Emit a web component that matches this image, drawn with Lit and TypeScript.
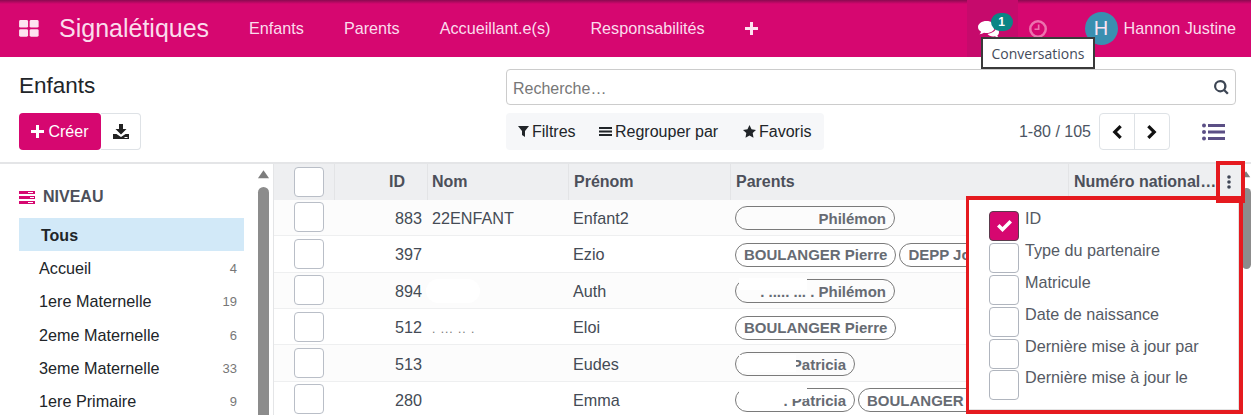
import { LitElement, html, css, svg } from "lit";
import { customElement } from "lit/decorators.js";

const NIVEAUX: [string, string][] = [
  ["Accueil", "4"],
  ["1ere Maternelle", "19"],
  ["2eme Maternelle", "6"],
  ["3eme Maternelle", "33"],
  ["1ere Primaire", "9"],
];

interface Pill { t: string; w?: number; mask?: string; }
const ROWS: { id: string; nom: string; pre: string; pills: Pill[]; blob?: boolean; smudge?: boolean }[] = [
  { id: "883", nom: "22ENFANT", pre: "Enfant2", pills: [{ t: "Philémon", w: 160 }] },
  { id: "397", nom: "", pre: "Ezio", pills: [{ t: "BOULANGER Pierre" }, { t: "DEPP Jo" }] },
  { id: "894", nom: "", pre: "Auth", pills: [{ t: ". ..... ... . Philémon", w: 160, mask: "top" }], blob: true },
  { id: "512", nom: ". ... .. .", pre: "Eloi", pills: [{ t: "BOULANGER Pierre" }], smudge: true },
  { id: "513", nom: "", pre: "Eudes", pills: [{ t: "Patricia", w: 120, mask: "mid" }] },
  { id: "280", nom: "", pre: "Emma", pills: [{ t: ". Patricia", w: 120, mask: "top" }, { t: "BOULANGER Pierre" }] },
];

const COLS = ["ID", "Type du partenaire", "Matricule", "Date de naissance", "Dernière mise à jour par", "Dernière mise à jour le"];

const ic = (w: number, h: number, vb: string, body: unknown, cls = "") =>
  html`<svg class="ic ${cls}" width=${w} height=${h} viewBox=${vb} fill="currentColor">${body}</svg>`;

@customElement("app-root")
export class AppRoot extends LitElement {
  static styles = css`
    :host { display: block; width: 1251px; height: 415px; overflow: hidden; position: relative; background: #fff;
      font-family: "Liberation Sans", Arial, sans-serif; font-size: 16px; color: #212529; }
    * { box-sizing: border-box; }
    .ic { display: block; flex: none; }

    .nav { height: 57px; background: #d60770; display: flex; align-items: center; color: #fbdcec; position: relative; font-size: 16.2px; }
    .nav::before { content: ""; position: absolute; left: 0; right: 0; top: 0; height: 4px;
      background: linear-gradient(#8a0a50, #d60770); }
    .apps { margin-left: 19px; width: 40px; color: #fde3f0; }
    .brand { font-size: 25px; width: 190px; }
    .link { margin-right: 40px; }
    .plus { color: #fde3f0; }
    .right { margin-left: auto; display: flex; align-items: center; height: 100%; }
    .chat { width: 51px; height: 100%; background: #c60a6c; display: flex; align-items: center; padding-left: 11px; position: relative; color: #fff; }
    .badge { position: absolute; left: 24px; top: 13px; width: 22px; height: 18px; border-radius: 9px; background: #0b8585;
      color: #fff; font-size: 12px; font-weight: 700; display: flex; align-items: center; justify-content: center; }
    .clock { margin-left: 11px; color: #ec72ae; }
    .avatar { margin-left: 38px; width: 33px; height: 33px; border-radius: 50%; background: #3a8fb0; color: #fde3f0;
      display: flex; align-items: center; justify-content: center; font-size: 20px; }
    .user { margin: 0 15px 0 6px; }
    .tip { position: absolute; left: 981px; top: 37px; width: 114px; height: 32px; background: #fff; border: 2px solid #3a3a3a;
      color: #444b5a; font-family: "Open Sans", sans-serif; font-size: 14px; display: flex; align-items: center; justify-content: center; z-index: 5; }

    .panel { height: 107px; border-bottom: 2px solid #e4e5e7; display: grid; grid-template-columns: 487px 1fr;
      grid-template-rows: 36px 37px; row-gap: 8px; padding: 12px 15px 0 19px; }
    .title { font-size: 22.5px; align-self: center; margin-top: -2px; }
    .search { border: 1px solid #ccc; border-radius: 4px; display: flex; align-items: center; justify-content: space-between;
      padding: 0 6px 0 6px; color: #777; }
    .search span { padding-top: 3px; }
    .search .ic { color: #3d4654; }
    .btns { display: flex; }
    .create { width: 82px; background: #d60770; color: #fff; border-radius: 4px; display: flex; align-items: center; justify-content: center; gap: 4px; }
    .dl { width: 40px; border: 1px solid #dee2e6; border-left: 0; border-radius: 0 4px 4px 0; display: flex; align-items: center; justify-content: center; color: #222; }
    .tools { display: flex; align-items: stretch; }
    .filters { width: 318px; background: #f6f7f9; border-radius: 4px; display: flex; align-items: center; padding-left: 12px; }
    .f { display: flex; align-items: center; gap: 3px; }
    .f.a { width: 81px; } .f.b { width: 144px; }
    .pager { margin-left: auto; display: flex; align-items: center; color: #4c5563; }
    .pg { margin-left: 8px; width: 71px; height: 37px; border: 1px solid #dee2e6; border-radius: 4px; display: flex; color: #111; }
    .pg div { flex: 1; display: flex; align-items: center; justify-content: center; }
    .pg div + div { border-left: 1px solid #dee2e6; }
    .view { margin-left: 32px; margin-right: 11px; color: #5b4f85; }

    .main { display: flex; height: 251px; overflow: hidden; font-size: 16.2px; }
    .side { width: 257px; flex: none; padding: 22px 13px 0 19px; }
    .shead { display: flex; align-items: center; gap: 8px; height: 22px; font-size: 16px; font-weight: 700; color: #4c4f5a; margin-bottom: 10px; }
    .magenta { color: #d60770; }
    .si { height: 33.2px; display: flex; align-items: center; justify-content: space-between; padding: 2px 7px 0 20px; }
    .si.sel { background: #d2e9f8; font-weight: 700; padding-left: 22px; font-size: 16px; }
    .si .n { font-size: 13px; color: #777; }
    .sb { width: 16px; flex: none; padding-top: 6px; color: #7d7d7d; }
    .thumb { margin: 8px 0 0 1px; width: 11px; height: 240px; border-radius: 6px 6px 0 0; background: #8c8c8c; }
    .table { flex: 1; min-width: 0; border-left: 1px solid #e4e5e7; display: flex; flex-direction: column; overflow: hidden; }
    .row { display: grid; grid-template-columns: 60px 93px 141px 162px 338px 1fr; height: 36.4px; flex: none; border-bottom: 1px solid #eeeff0; align-items: center; background: #fff; }
    .row.odd { background: #fcfcfc; }
    .row.head { height: 35.8px; background: #eeeff1; font-size: 16px; font-weight: 700; color: #4c4f5a; border-bottom: 0; align-items: stretch; }
    .head > div { display: flex; align-items: center; border-left: 1px solid #e3e4e6; }
    .head > div:first-child { border-left: 0; }
    .cb { width: 30px; height: 30px; border: 1px solid #b9bec7; border-radius: 4px; background: #fff; margin-left: 20px; }
    .idc { text-align: right; padding: 2px 5px 0 0; color: #444b55; position: relative; }
    .head .idh { justify-content: flex-end; padding-right: 22px; }
    .head .l { padding-left: 4px; }
    .head .l2 { padding-left: 5px; }
    .nom { padding: 2px 0 0 5px; color: #444b55; }
    .nom.sm { color: #777; font-size: 12px; letter-spacing: 1px; padding-top: 5px; }
    .pre { padding: 2px 0 0 5px; color: #444b55; }
    .blob { position: absolute; left: 92px; top: -1px; width: 54px; height: 24px; border-radius: 12px; background: #fff; }
    .pills { grid-column: 5 / 7; display: flex; gap: 3px; padding: 2px 0 0 5px; overflow: hidden; white-space: nowrap; }
    .pill { position: relative; height: 24px; border: 1.5px solid #7a7a7a; border-radius: 12px; padding: 0 8px; font-size: 15px; font-weight: 700; color: #666b73;
      display: flex; align-items: center; justify-content: flex-end; flex: none; overflow: visible; }
    .mask { position: absolute; background: #fff; }
    .mask.top { left: 3px; top: -2px; width: 68px; height: 12px; }
    .mask.mid { left: 3px; top: 2px; width: 57px; height: 17px; }
    .natl { display: flex; justify-content: space-between; padding: 0 10px 0 5px; white-space: nowrap; position: relative; }
    .dots { position: absolute; left: 158px; top: 11px; color: #3f4656; }

    .tsb { width: 10px; flex: none; padding-top: 6px; color: #7d7d7d; background: #fff; }
    .tthumb { margin-top: 9px; height: 81px; width: 9px; margin-left: 1px; border-radius: 6px; background: #8c8c8c; }

    .menu { position: absolute; left: 966px; top: 196px; width: 277px; height: 218px; border: 4px solid #e51a1f; border-left-width: 3px; background: #fff;
      box-shadow: inset -1px -1px 0 #e3e3e3; padding: 11px 0 0 20px; z-index: 3; color: #555a64; font-size: 16.2px; }
    .mi { display: flex; height: 31.9px; gap: 6px; }
    .mi span { margin-top: -2px; }
    .box { width: 30px; height: 30px; border: 1px solid #b0b5be; border-radius: 4px; background: #fff; display: flex; align-items: center; justify-content: center; flex: none; color: #fff; }
    .box.on { background: #d60770; border-color: #5b3a4c; }
    .redbox { position: absolute; left: 1216px; top: 161px; width: 29px; height: 42px; border: 4px solid #e51a1f; z-index: 4; }
  `;

  private pill(p: Pill) {
    return html`<div class="pill" style=${p.w ? `width:${p.w}px` : ""}>
      ${p.mask ? html`<i class="mask ${p.mask}"></i>` : ""}${p.t}
    </div>`;
  }

  render() {
    const comments = svg`<path d="M8.500 1C3.800 1 0 3.700 0 7c0 1.900 1.200 3.600 3.100 4.700C2.800 12.800 2.200 13.600 1.500 14.300 3.300 14 4.800 13.300 6 12.700c.800.200 1.700.300 2.500.300 4.700 0 8.500-2.700 8.500-6S13.200 1 8.500 1z"/><path d="M18.500 6.500c0 3.800-4 6.900-9 7.400 1.100 1.500 3.100 2.500 5.500 2.500.600 0 1.200-.100 1.800-.200 1 .600 2.300 1.200 3.900 1.500-.600-.600-1.100-1.400-1.400-2.300C20.300 15 21 13.700 21 12.300c0-2.200-1-3.900-2.800-5z"/>`;
    return html`
      <div class="nav">
        <div class="apps">${ic(20, 17, "0 0 21 18", svg`<rect width="9.500" height="8" rx="1.500"/><rect x="11.200" width="9.500" height="8" rx="1.500"/><rect y="9.700" width="9.500" height="8" rx="1.500"/><rect x="11.200" y="9.700" width="9.500" height="8" rx="1.500"/>`)}</div>
        <div class="brand">Signalétiques</div>
        <div class="link">Enfants</div>
        <div class="link">Parents</div>
        <div class="link">Accueillant.e(s)</div>
        <div class="link">Responsabilités</div>
        <div class="plus">${ic(13, 13, "0 0 13 13", svg`<path d="M5 0h3v5h5v3H8v5H5V8H0V5h5z"/>`)}</div>
        <div class="right">
          <div class="chat">${ic(21, 18, "0 0 21 18", comments)}<div class="badge">1</div></div>
          <div class="clock">${ic(18, 18, "0 0 18 18", svg`<path fill-rule="evenodd" d="M9 0a9 9 0 1 0 0 18A9 9 0 0 0 9 0zm0 2.500a6.500 6.500 0 1 1 0 13 6.500 6.500 0 0 1 0-13z"/><path d="M8.800 4.500h1.700v5.500H5.500V8.400h3.300z"/>`)}</div>
          <div class="avatar">H</div>
          <div class="user">Hannon Justine</div>
        </div>
      </div>
      <div class="tip">Conversations</div>

      <div class="panel">
        <div class="title">Enfants</div>
        <div class="search"><span>Recherche…</span>${ic(15, 15, "0 0 15 15", svg`<path fill-rule="evenodd" d="M6.200 0a6.200 6.200 0 1 0 3.600 11.300l3.200 3.300 1.700-1.700-3.300-3.200A6.200 6.200 0 0 0 6.200 0zm0 2.200a4 4 0 1 1 0 8 4 4 0 0 1 0-8z"/>`)}</div>
        <div class="btns">
          <div class="create">${ic(13, 13, "0 0 13 13", svg`<path d="M5 0h3v5h5v3H8v5H5V8H0V5h5z"/>`)}<span>Créer</span></div>
          <div class="dl">${ic(16, 15, "0 0 16 15", svg`<path d="M6 0h4v5h3.500L8 10.500 2.500 5H6z"/><path fill-rule="evenodd" d="M0 10h3.500L8 13l4.500-3H16v5H0zm11.500 3v1h3v-1z"/>`)}</div>
        </div>
        <div class="tools">
          <div class="filters">
            <div class="f a">${ic(11, 11, "0 0 11 11", svg`<path d="M0 0h11L7 5v6L4 9V5z"/>`)}<span>Filtres</span></div>
            <div class="f b">${ic(13, 11, "0 0 13 11", svg`<path d="M0 1h13v2H0zM0 4.500h13v2H0zM0 8h13v2H0z"/>`)}<span>Regrouper par</span></div>
            <div class="f">${ic(13, 13, "0 0 13 13", svg`<path d="M6.500 0l2 4.300 4.500.6-3.300 3.200.8 4.700-4-2.300-4 2.300.8-4.700L0 4.900l4.500-.6z"/>`)}<span>Favoris</span></div>
          </div>
          <div class="pager">
            <span>1-80 / 105</span>
            <div class="pg">
              <div>${ic(10, 14, "0 0 10 14", svg`<path d="M7.500 0L9.800 2.300 5 7l4.800 4.700L7.500 14 .5 7z"/>`)}</div>
              <div>${ic(10, 14, "0 0 10 14", svg`<path d="M2.500 0L.2 2.300 5 7 .2 11.700 2.500 14l7-7z"/>`)}</div>
            </div>
            <div class="view">${ic(23, 18, "0 0 23 18", svg`<circle cx="2" cy="2.500" r="2"/><circle cx="2" cy="9" r="2"/><circle cx="2" cy="15.500" r="2"/><path d="M6 1h17v3H6zM6 7.500h17v3H6zM6 14h17v3H6z"/>`)}</div>
          </div>
        </div>
      </div>

      <div class="main">
        <div class="side">
          <div class="shead">
            <span class="magenta">${ic(16, 13, "0 0 16 13", svg`<path fill-rule="evenodd" d="M0 0h16v3H0zm9 1v1h5V1zM0 5h16v3H0zm11 1v1h4V6zM0 10h16v3H0zm9 1v1h5v-1z"/>`)}</span>
            NIVEAU
          </div>
          <div class="si sel">Tous</div>
          ${NIVEAUX.map(([a, n]) => html`<div class="si"><span>${a}</span><span class="n">${n}</span></div>`)}
        </div>
        <div class="sb">
          ${ic(13, 9, "0 0 14 9", svg`<path d="M7 0l6 8.500H1z"/>`)}
          <div class="thumb"></div>
        </div>
        <div class="table">
          <div class="row head">
            <div><div class="cb"></div></div>
            <div class="idh">ID</div>
            <div class="l">Nom</div>
            <div class="l2">Prénom</div>
            <div class="l2">Parents</div>
            <div class="natl">Numéro national…<span class="dots">${ic(4, 14, "0 0 4 14", svg`<circle cx="2" cy="2" r="1.800"/><circle cx="2" cy="7" r="1.800"/><circle cx="2" cy="12" r="1.800"/>`)}</span></div>
          </div>
          ${ROWS.map((r, i) => html`
            <div class="row ${i % 2 ? "" : "odd"}">
              <div class="cb"></div>
              <div class="idc">${r.id}${r.blob ? html`<i class="blob"></i>` : ""}</div>
              <div class="nom ${r.smudge ? "sm" : ""}">${r.nom}</div>
              <div class="pre">${r.pre}</div>
              <div class="pills">${r.pills.map((p) => this.pill(p))}</div>
            </div>`)}
        </div>
        <div class="tsb">
          ${ic(10, 9, "0 0 14 9", svg`<path d="M7 0l6 8.500H1z"/>`)}
          <div class="tthumb"></div>
        </div>
      </div>

      <div class="menu">
        ${COLS.map((c, i) => html`
          <div class="mi">
            <div class="box ${i === 0 ? "on" : ""}">${i === 0 ? ic(15, 12, "0 0 15 12", svg`<path d="M5.500 12L0 6.500 2.500 4l3 3L12.500 0 15 2.500z"/>`) : ""}</div>
            <span>${c}</span>
          </div>`)}
      </div>
      <div class="redbox"></div>
    `;
  }
}
